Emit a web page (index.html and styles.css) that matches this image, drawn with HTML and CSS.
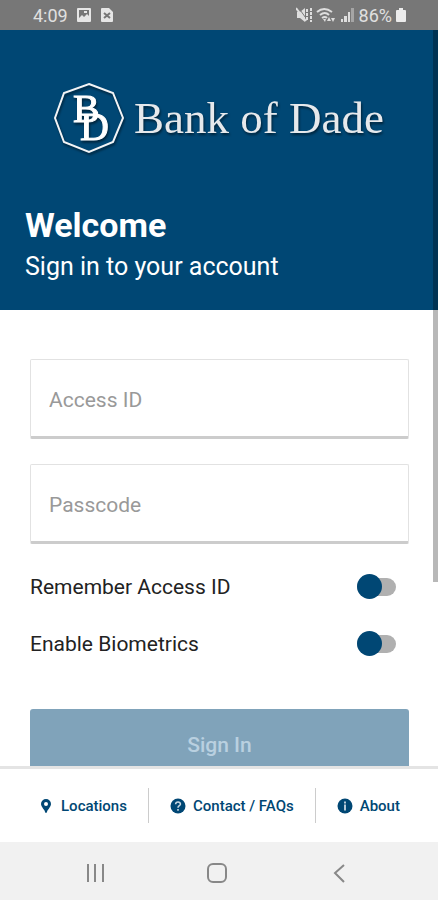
FILE: index.html
```html
<!DOCTYPE html>
<html lang="en">
<head>
  <meta charset="UTF-8">
  <meta name="viewport" content="width=device-width, initial-scale=1.0">
  <title>Bank of Dade - Sign In</title>
  <link rel="stylesheet" href="styles.css">
</head>
<body>

<div class="status-bar">
  <div class="status-group">
    <span>4:09</span>
    <svg width="16" height="16" viewBox="0 0 16 16">
      <path fill="#e6e6e6" fill-rule="evenodd" d="M2 1h12q1 0 1 1v12q0 1-1 1H2q-1 0-1-1V2q0-1 1-1zM3 3v8l3-3 2 2 3-3 2 2V3z"/>
      <path fill="#e6e6e6" d="M8 4h3v2H8z"/>
    </svg>
    <svg width="14" height="16" viewBox="0 0 14 16">
      <path fill="#e6e6e6" d="M2 1h7l4 4v9q0 1-1 1H2q-1 0-1-1V2q0-1 1-1z"/>
      <path stroke="#777" stroke-width="2" d="M4 6l6 5M10 6l-6 5"/>
    </svg>
  </div>
  <div class="status-group status-right">
    <svg width="16" height="16" viewBox="0 0 16 16">
      <path fill="#dedede" d="M1 5h3l5-4v14l-5-4H1z"/>
      <path stroke="#777" stroke-width="1" d="M2 0l10 14"/>
      <path stroke="#dedede" stroke-width="2" d="M0 1l10 13"/>
      <path fill="none" stroke="#dedede" stroke-width="2" stroke-dasharray="3 1" d="M11 2v12M15 1v14"/>
    </svg>
    <svg width="20" height="16" viewBox="0 0 20 16">
      <path fill="none" stroke="#dedede" stroke-width="2" d="M1 5q7-6 15 0M4 8q5-4 9 0M6 11q3-2 5 0"/>
      <path fill="#dedede" d="M7 12h3l-1 3zM11 14l2-4 2 4zM15 11h4l-2 4z"/>
    </svg>
    <svg width="15" height="16" viewBox="0 0 15 16">
      <path fill="#dedede" d="M1 12h2v3H1zM4 9h3v6H4zM8 5h2v10H8z"/>
      <path fill="#a5a5a5" d="M11 1h3v14h-3z"/>
    </svg>
    <span>86%</span>
    <svg width="10" height="16" viewBox="0 0 10 16">
      <path fill="#ececec" d="M3 1h4v2h2q1 0 1 1v10q0 1-1 1H1q-1 0-1-1V4q0-1 1-1h2z"/>
    </svg>
  </div>
</div>

<main class="content">
  <header class="hero">
    <svg class="logo" viewBox="0 0 336 76" role="img" aria-label="Bank of Dade">
      <path fill="none" stroke="#f2f4f6" stroke-width="2" d="M38 5l24 9 10 25-10 24-24 10-25-10-9-24 9-25z"/>
      <text class="logo-letter" x="22" y="43">B</text>
      <text class="logo-letter" x="29" y="61">D</text>
      <text class="logo-name" x="83" y="54">Bank of Dade</text>
    </svg>
    <h1 class="hero-title">Welcome</h1>
    <p class="hero-text">Sign in to your account</p>
  </header>

  <form class="login-form">
    <input class="field" type="text" placeholder="Access ID" aria-label="Access ID">
    <input class="field" type="password" placeholder="Passcode" aria-label="Passcode">
    <label class="switch-row">
      Remember Access ID
      <input class="switch" type="checkbox">
    </label>
    <label class="switch-row">
      Enable Biometrics
      <input class="switch" type="checkbox">
    </label>
    <button class="sign-in" type="submit" disabled>Sign In</button>
  </form>
  <div class="scroll-thumb"></div>
</main>

<footer class="footer">
  <a class="footer-link" href="#locations">
    <svg width="16" height="16" viewBox="0 0 16 16">
      <path fill="#004774" fill-rule="evenodd" d="M8 1a5 5 0 0 1 5 5c0 3-4 6-4 8q-1 2-2 0c0-2-4-5-4-8a5 5 0 0 1 5-5zM8 4a2 2 0 1 0 0 4 2 2 0 0 0 0-4z"/>
    </svg>
    Locations
  </a>
  <a class="footer-link" href="#contact">
    <svg width="16" height="16" viewBox="0 0 16 16">
      <circle cx="8" cy="8" r="7.5" fill="#004774"/>
      <path fill="none" stroke="#c9d8e3" stroke-width="1.6" d="M5.6 6.2c.2-3 5-2.800 4.800 0C10.300 7.800 8 7.600 8 9.700M8 11v1.700"/>
    </svg>
    Contact / FAQs
  </a>
  <a class="footer-link" href="#about">
    <svg width="16" height="16" viewBox="0 0 16 16">
      <circle cx="8" cy="8" r="7.5" fill="#004774"/>
      <path stroke="#c9d8e3" stroke-width="1.8" d="M8 3.500v2M8 6.500v6"/>
    </svg>
    About
  </a>
</footer>

<nav class="nav-bar">
  <button class="nav-button" type="button" aria-label="Recent apps">
    <svg width="24" height="24" viewBox="0 0 24 24">
      <path stroke="#888" stroke-width="2" d="M4 3v18M11 3v18M19 3v18"/>
    </svg>
  </button>
  <button class="nav-button" type="button" aria-label="Home">
    <svg width="24" height="24" viewBox="0 0 24 24">
      <rect x="3" y="3" width="18" height="18" rx="5" fill="none" stroke="#888" stroke-width="2"/>
    </svg>
  </button>
  <button class="nav-button" type="button" aria-label="Back">
    <svg width="24" height="24" viewBox="0 0 24 24">
      <path fill="none" stroke="#888" stroke-width="2" d="M17 4l-9 8 9 9"/>
    </svg>
  </button>
</nav>

</body>
</html>
```

FILE: styles.css
```css
* {
  box-sizing: border-box;
}

body {
  display: flex;
  flex-direction: column;
  height: 100vh;
  margin: 0;
  background-color: #fff;
  color: #222;
  font-family: Roboto, sans-serif;
}

svg {
  display: block;
  flex-shrink: 0;
}

/* Phone status bar */
.status-bar {
  display: flex;
  justify-content: space-between;
  align-items: center;
  flex-shrink: 0;
  height: 30px;
  padding: 0 32px 0 33px;
  background-color: #777;
  color: #e0e0e0;
  font-size: 18px;
}

.status-group {
  display: flex;
  align-items: center;
  gap: 8px;
}

.status-right {
  gap: 4px;
}

/* Scrolling area between status bar and footer */
.content {
  flex: 1;
  min-height: 0;
  overflow: hidden;
  position: relative;
}

.scroll-thumb {
  position: absolute;
  top: 0;
  right: 0;
  width: 5px;
  height: 75%;
  background-color: rgba(0, 0, 0, 0.28);
}

.hero {
  height: 280px;
  padding: 49px 25px 0;
  background-color: #004774;
  color: #fff;
}

.logo {
  width: 336px;
  max-width: 100%;
  margin: 0 auto;
  overflow: visible;
  filter: drop-shadow(1px 2px 1px rgba(0, 0, 0, 0.5));
}

.logo-letter {
  fill: #fff;
  font-family: "Liberation Serif", serif;
  font-size: 40px;
  stroke: #fff;
  stroke-width: 1px;
}

.logo-name {
  fill: #e6e9ec;
  font-family: "Liberation Serif", serif;
  font-size: 45px;
}

.hero-title {
  margin: 50px 0 0;
  font-size: 34px;
  line-height: 40px;
}

.hero-text {
  margin: 6px 0 0;
  font-size: 25px;
  line-height: 32px;
}

/* Login form */
.login-form {
  display: flex;
  flex-direction: column;
  padding: 49px 29px 49px 30px;
}

.field {
  width: 100%;
  height: 80px;
  margin-bottom: 25px;
  padding: 3px 18px 0;
  border: 1px solid #e2e2e2;
  border-bottom: 3px solid #ccc;
  border-radius: 2px;
  background-color: #fff;
  font-family: inherit;
  font-size: 21px;
}

.field::placeholder {
  color: #999;
}

.switch-row {
  display: flex;
  justify-content: space-between;
  align-items: center;
  height: 25px;
  margin: 5px 13px 27px 0;
  font-size: 21px;
}

.switch {
  display: flex;
  align-items: center;
  appearance: none;
  width: 39px;
  height: 18px;
  margin: 0;
  border-radius: 9px;
  background-color: #b0b0b0;
}

.switch::before {
  content: "";
  width: 25px;
  height: 25px;
  border-radius: 50%;
  background-color: #004774;
}

.sign-in {
  height: 72px;
  margin-top: 26px;
  border: 0;
  border-radius: 3px;
  background-color: #80a3ba;
  color: #b9d0e0;
  font-family: inherit;
  font-size: 21px;
  font-weight: 500;
}

/* Footer links */
.footer {
  display: flex;
  align-items: center;
  flex-shrink: 0;
  height: 76px;
  padding: 0 17px;
  border-top: 3px solid #e4e4e4;
  background-color: #fff;
}

.footer-link {
  display: flex;
  flex: 1 1 auto;
  justify-content: center;
  align-items: center;
  gap: 7px;
  height: 35px;
  color: #004774;
  font-size: 15px;
  font-weight: 500;
  text-decoration: none;
}

.footer-link + .footer-link {
  border-left: 1px solid #ccc;
}

/* Android navigation */
.nav-bar {
  display: flex;
  justify-content: center;
  align-items: center;
  flex-shrink: 0;
  height: 58px;
  padding: 3px 3px 0 0;
  background-color: #f1f1f1;
}

.nav-button {
  display: flex;
  justify-content: center;
  width: 28%;
  padding: 0;
  border: 0;
  background: none;
}
```
